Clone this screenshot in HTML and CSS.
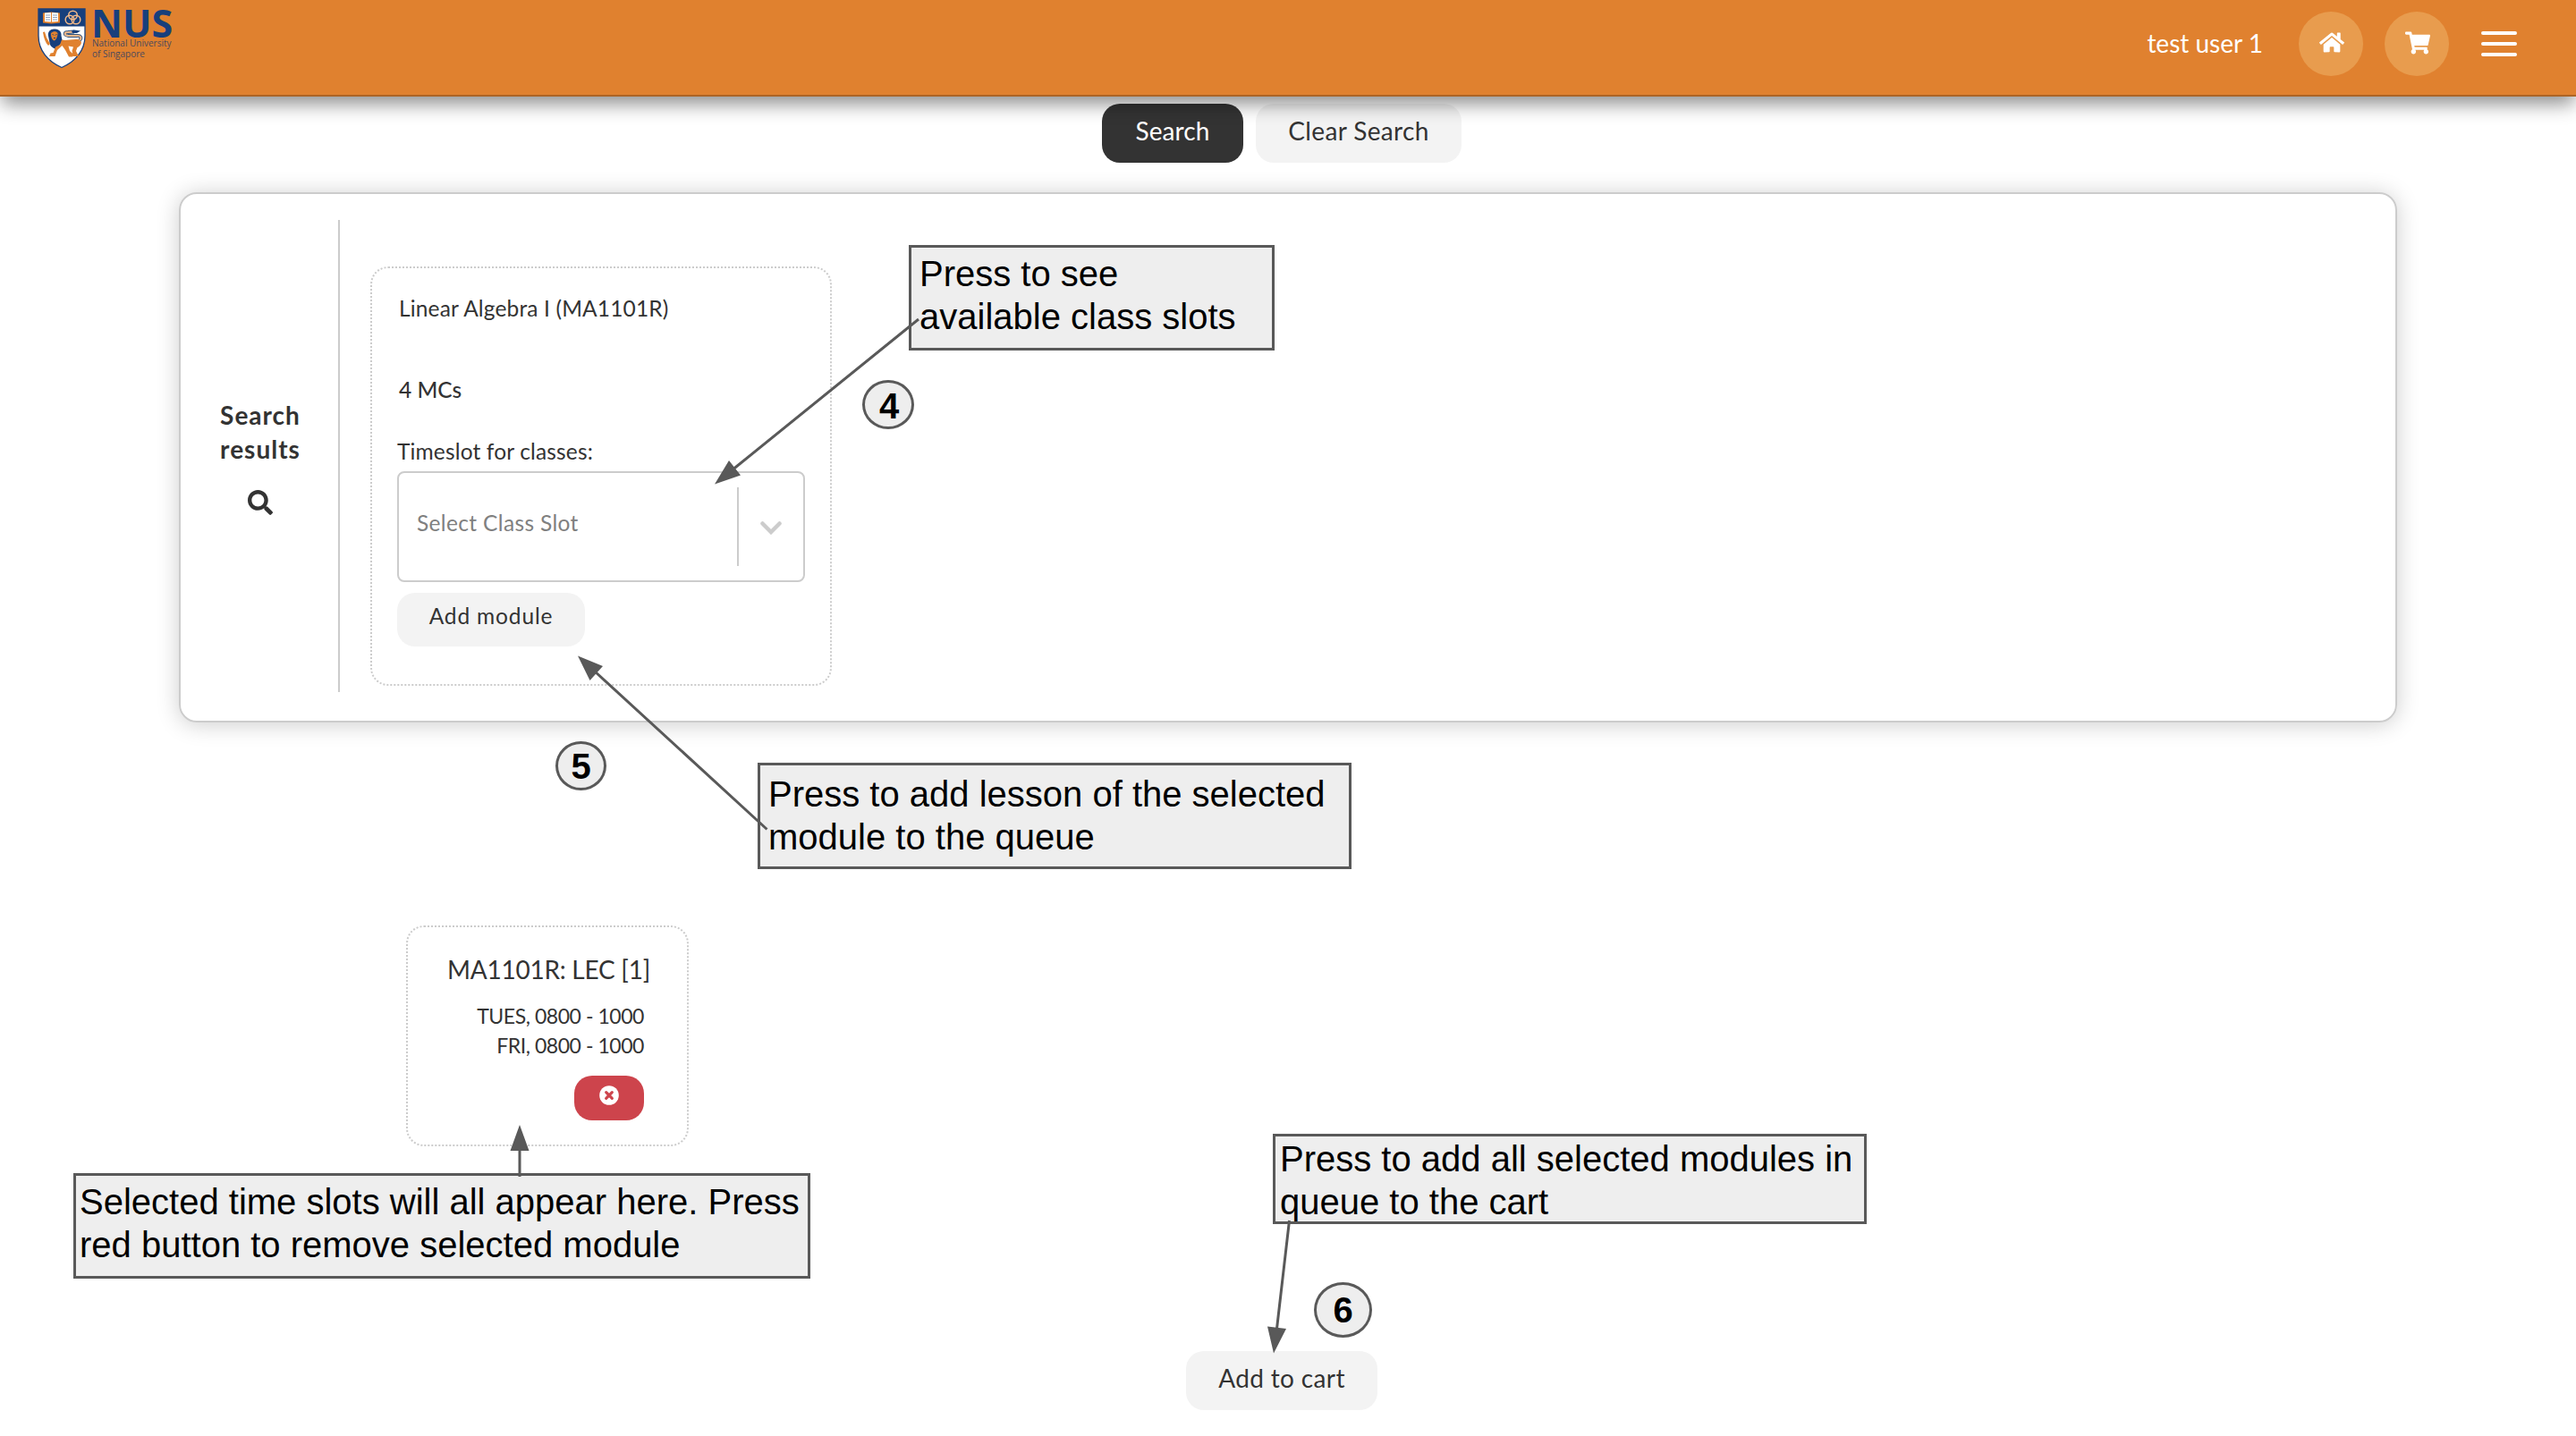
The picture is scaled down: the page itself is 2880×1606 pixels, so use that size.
FILE: index.html
```html
<!DOCTYPE html>
<html lang="en">
<head>
<meta charset="utf-8">
<title>Module search</title>
<link rel="stylesheet" href="styles.css">
</head>
<body>
<header class="topbar">
  <div class="brand">
    <svg class="crest" viewBox="0 0 54 68">
      <path d="M1 1H53V31C53 48 42 60 27 66.500C12 60 1 48 1 31Z" fill="#fff" stroke="#173f7c" stroke-width="1.300"/>
      <path d="M1 1H53V20.500H1Z" fill="#173f7c"/>
      <path d="M6 5.500 15.500 4.500 25 5.500V16.500L15.500 17.500 6 16.500Z" fill="#e0812f"/>
      <path d="M8 5.500 15 5V15.500L8 15ZM16 5 23 5.500V15L16 15.500Z" fill="#fff"/>
      <path d="M9 8H14M9 10.500H14M9 13H14M17 8H22M17 10.500H22M17 13H22" stroke="#8296b8" stroke-width=".9"/>
      <g fill="none" stroke="#f3b988" stroke-width="1.500"><circle cx="39.500" cy="8" r="4.800"/><circle cx="36" cy="13" r="4.800"/><circle cx="43" cy="13" r="4.800"/></g>
      <path d="M12 31C11 26 15 23 19 23.500C24 23 27 27 26.500 31L28 38L24 42L20 46C17 44 14 43 13.500 39Z" fill="#173f7c"/>
      <path d="M15 28C18 25.500 21 26 22.500 28C22.500 32 20.500 36 18.500 36.500C16 35.500 14.500 31 15 28Z" fill="#e0812f"/>
      <path d="M16.500 29 18 30.500M21.500 29 20 30.500M18 33.500H20" stroke="#173f7c" fill="none"/>
      <path d="M6 27 8 26.500 10 33 14 40 12 42C9 39 7 34 6 27Z" fill="#e0812f"/>
      <path d="M27 35.500C33 37 40 34 47 35.500C51 38 48 43 44.500 44L43 48L46 54H40L38.500 48L40 43.500L34.500 42.500L36 48L41 52.500L39 54.500H35L31 47L27.500 42L22 47L19.500 54H13L14.500 50.500L17.500 50L20 43.500L25 41Z" fill="#e0812f"/>
      <path d="M47 36C50 33 48 30.500 44 31H34C29 30 30 27 34 27L41 26.500" stroke="#38577f" stroke-width="3.800" fill="none"/>
      <path d="M47 36C50 33 48 30.500 44 31H34C29 30 30 27 34 27L41 26.500" stroke="#f0b88a" stroke-width="1.900" fill="none"/>
      <path d="M38 25.500 41 24.500 48 25.500 44 28H39Z" fill="#173f7c"/>
    </svg>
    <div class="wordmark">
      <span class="wordmark-main">NUS</span>
      <span class="wordmark-sub">National University<br>of Singapore</span>
    </div>
  </div>
  <nav class="topnav">
    <span class="user">test user 1</span>
    <a class="round"><svg class="i-home" viewBox="0 0 576 512"><path fill="#fff" d="M280.400 148.300 96 300.100V464a16 16 0 0 0 16 16l112.100-.3a16 16 0 0 0 15.900-16V368a16 16 0 0 1 16-16h64a16 16 0 0 1 16 16v95.600a16 16 0 0 0 16 16.100L464 480a16 16 0 0 0 16-16V300L295.700 148.300a12.200 12.200 0 0 0-15.300 0zM571.600 251.500 488 182.600V44a12 12 0 0 0-12-12h-56a12 12 0 0 0-12 12v72.600L318.500 43a48 48 0 0 0-61 0L4.300 251.500a12 12 0 0 0-1.600 16.900l25.500 31a12 12 0 0 0 16.900 1.600L280.400 107.200a12.200 12.200 0 0 1 15.300 0L531 301a12 12 0 0 0 16.900-1.600l25.500-31a12 12 0 0 0-1.800-16.900z"/></svg></a>
    <a class="round"><svg class="i-cart" viewBox="0 0 576 512"><path fill="#fff" d="M528.100 301.300l47.300-208C578.800 78.300 567.400 64 552 64H159.200l-9.200-44.800C147.800 8 137.900 0 126.500 0H24C10.700 0 0 10.700 0 24v16c0 13.300 10.700 24 24 24h69.900l70.200 343.400C147.300 417.100 136 435.200 136 456c0 30.900 25.100 56 56 56s56-25.100 56-56c0-15.700-6.400-29.800-16.800-40h209.600C430.400 426.200 424 440.300 424 456c0 30.900 25.100 56 56 56s56-25.100 56-56c0-22.200-12.900-41.300-31.600-50.400l5.500-24.300c3.400-15-8-29.300-23.400-29.300H218.100l-6.500-32h293.100c11.200 0 20.900-7.800 23.400-18.700z"/></svg></a>
    <span class="burger"><i></i><i></i><i></i></span>
  </nav>
</header>

<main class="page">
  <div class="actions">
    <button class="btn btn-dark">Search</button>
    <button class="btn">Clear Search</button>
  </div>

  <section class="panel">
    <aside class="panel-side">
      <h2 class="side-title">Search<br>results</h2>
      <svg class="i-search" viewBox="0 0 512 512"><path fill="#333" d="M505 442.700L405.300 343c-4.500-4.500-10.600-7-17-7H372c27.600-35.300 44-79.700 44-128C416 93.100 322.900 0 208 0S0 93.100 0 208s93.100 208 208 208c48.300 0 92.700-16.400 128-44v16.300c0 6.400 2.500 12.500 7 17l99.700 99.700c9.400 9.400 24.600 9.400 33.900 0l28.300-28.300c9.400-9.400 9.400-24.600.1-34zM208 336c-70.700 0-128-57.200-128-128 0-70.700 57.200-128 128-128 70.700 0 128 57.200 128 128 0 70.700-57.200 128-128 128z"/></svg>
    </aside>
    <article class="module">
      <p class="module-name">Linear Algebra I (MA1101R)</p>
      <p class="module-mc">4 MCs</p>
      <p class="module-label">Timeslot for classes:</p>
      <div class="select">
        <span class="select-text">Select Class Slot</span>
        <span class="select-arrow"><svg viewBox="0 0 24 15"><path d="M2.500 2.500 12 12 21.500 2.500" fill="none" stroke="#ccc" stroke-width="4.500" stroke-linecap="round"/></svg></span>
      </div>
      <button class="btn btn-add">Add module</button>
    </article>
  </section>

  <section class="queued">
    <p class="queued-name">MA1101R: LEC [1]</p>
    <p class="queued-time">TUES, 0800 - 1000<br>FRI, 0800 - 1000</p>
    <button class="remove"><svg viewBox="0 0 22 22"><circle cx="11" cy="11" r="10.800" fill="#fff"/><path d="M7.700 7.700 14.300 14.300M14.300 7.700 7.700 14.300" stroke="#cd444c" stroke-width="3.200" stroke-linecap="round"/></svg></button>
  </section>

  <button class="btn btn-cart">Add to cart</button>
</main>

<div class="notes">
  <div class="note note-slots">Press to see<br>available class slots</div>
  <div class="note note-queue">Press to add lesson of the selected<br>module to the queue</div>
  <div class="note note-selected">Selected time slots will all appear here. Press<br>red button to remove selected module</div>
  <div class="note note-cart">Press to add all selected modules in<br>queue to the cart</div>
  <div class="step step-4">4</div>
  <div class="step step-5">5</div>
  <div class="step step-6">6</div>
  <svg class="arrows" viewBox="0 0 2880 1606">
    <g stroke="#595959" stroke-width="3"><path d="M1027 357 820 524.500M857.500 927.500 664 750M581 1316V1285M1441.500 1365 1427.500 1486"/></g>
    <g fill="#595959"><path d="M799 541.500 815 515 828 531.500ZM646 733.500 674 745 659.500 761ZM581 1258 591.500 1287H570.500ZM1424 1513.500 1417 1483.500 1438 1486Z"/></g>
  </svg>
</div>
</body>
</html>
```
FILE: styles.css
```css
* { box-sizing: border-box; }
body { margin: 0; width: 2880px; height: 1606px; overflow: hidden; position: relative; background: #fff; color: #333; font-family: Lato, "Liberation Sans", sans-serif; }
p, h2 { margin: 0; }
button { border: 0; font-family: inherit; color: inherit; }

.topbar { position: relative; z-index: 2; display: flex; justify-content: space-between; height: 108px; padding: 0 66px 0 42px; background: #e0812f; border-bottom: 2px solid #ad6425; box-shadow: 0 10px 20px -2px rgba(0,0,0,.45); }
.brand { display: flex; gap: 6px; padding-top: 9px; }
.crest { width: 54px; height: 68px; }
.wordmark { display: flex; flex-direction: column; color: #173f7c; font-family: "Open Sans", sans-serif; }
.wordmark-main { font-size: 43px; line-height: 34px; font-weight: 700; }
.wordmark-sub { padding-left: 1px; font-size: 10px; line-height: 11.500px; color: #4c4a5c; }
.topnav { display: flex; align-items: flex-start; padding-top: 13px; color: #fff; }
.user { font-size: 28px; line-height: 70px; margin-right: 40px; }
.round { display: flex; align-items: center; justify-content: center; width: 72px; height: 72px; margin-right: 24px; border-radius: 50%; background: #e89c4e; }
.i-home { width: 28px; height: 25px; margin-top: -3px; margin-left: 2px; }
.i-cart { width: 28px; height: 26px; margin-top: -2px; margin-left: 2px; }
.burger { display: flex; flex-direction: column; gap: 8px; margin: 22px 0 0 12px; }
.burger i { width: 40px; height: 4px; border-radius: 2px; background: #fff; }

.page { display: flex; flex-direction: column; align-items: flex-start; }
.btn { height: 66px; padding: 0 0 6px; border-radius: 20px; background: #f3f3f3; font-size: 28px; letter-spacing: .35px; text-align: center; }
.btn-dark { background: #333; color: #fff; letter-spacing: .1px; }
.actions { display: flex; gap: 14px; padding: 8px 0 0 1232px; }
.actions .btn { width: 230px; }
.actions .btn-dark { width: 158px; }

.panel { display: flex; align-items: flex-start; width: 2480px; height: 593px; margin: 33px 0 0 200px; padding-top: 29px; border: 2px solid #ccc; border-radius: 20px; box-shadow: 0 2px 26px rgba(0,0,0,.2); }
.panel-side { display: flex; flex-direction: column; align-items: center; width: 178px; height: 528px; padding-top: 199px; border-right: 2px solid #ccc; }
.side-title { padding-left: 2px; font-size: 28px; line-height: 38px; font-weight: 700; letter-spacing: 1px; text-align: center; }
.i-search { width: 28px; height: 28px; margin: 27px 0 0 2px; }

.module { width: 516px; height: 469px; margin: 52px 0 0 34px; padding: 28px; border: 2px dotted #ccc; border-radius: 20px; font-size: 24.500px; line-height: 30px; }
.module-name { padding: 2px 0 0 2px; letter-spacing: .15px; }
.module-mc { padding: 61px 0 0 2px; font-weight: 500; }
.module-label { padding-top: 39px; letter-spacing: .15px; }
.select { display: flex; align-items: center; width: 456px; height: 124px; margin-top: 7px; border: 2px solid #ccc; border-radius: 8px; color: #808080; }
.select-text { flex: 1; padding: 0 0 8px 20px; letter-spacing: .35px; }
.select-arrow { display: flex; align-items: center; justify-content: center; width: 74px; height: 88px; border-left: 2px solid #ccc; }
.select-arrow svg { width: 24px; height: 15px; margin-top: 2px; }
.btn-add { width: 210px; height: 60px; margin-top: 12px; font-size: 24.500px; letter-spacing: .85px; padding-bottom: 9px; }

.queued { display: flex; flex-direction: column; align-items: flex-end; width: 316px; height: 247px; margin: 227px 0 0 454px; padding: 29px 48px 0 0; border: 2px dotted #ccc; border-radius: 20px; }
.queued-name { margin-right: -7px; font-size: 28px; line-height: 36px; letter-spacing: -.25px; white-space: nowrap; }
.queued-time { padding-top: 18px; font-size: 23px; line-height: 33px; letter-spacing: -.45px; text-align: right; }
.remove { display: flex; justify-content: center; width: 78px; height: 50px; margin-top: 17px; padding: 11px 0 0; border-radius: 20px; background: #cd444c; }
.remove svg { width: 22px; height: 22px; }
.btn-cart { width: 214px; margin: 229px 0 0 1326px; }

/* Instruction callouts laid over the page */
.notes { position: absolute; inset: 0; z-index: 3; font-family: "Liberation Sans", Arial, sans-serif; color: #000; }
.note { position: absolute; border: 3px solid #595959; background: #eee; font-size: 40px; line-height: 48px; white-space: nowrap; }
.note-slots { left: 1016px; top: 274px; width: 409px; height: 118px; padding: 5px 9px; }
.note-queue { left: 847px; top: 853px; width: 664px; height: 119px; padding: 8px 9px; }
.note-selected { left: 82px; top: 1312px; width: 824px; height: 118px; padding: 5px 4px; }
.note-cart { left: 1423px; top: 1268px; width: 664px; height: 101px; padding: 1px 5px; }
.step { position: absolute; border: 3px solid #595959; border-radius: 50%; background: #eee; font-size: 40px; font-weight: 700; text-align: center; }
.step-4 { left: 964px; top: 425px; width: 58px; height: 55px; padding-left: 2px; line-height: 53px; }
.step-5 { left: 621px; top: 829px; width: 57px; height: 55px; line-height: 51px; }
.step-6 { left: 1469px; top: 1434px; width: 65px; height: 62px; line-height: 57px; }
.arrows { position: absolute; inset: 0; width: 2880px; height: 1606px; }
```
